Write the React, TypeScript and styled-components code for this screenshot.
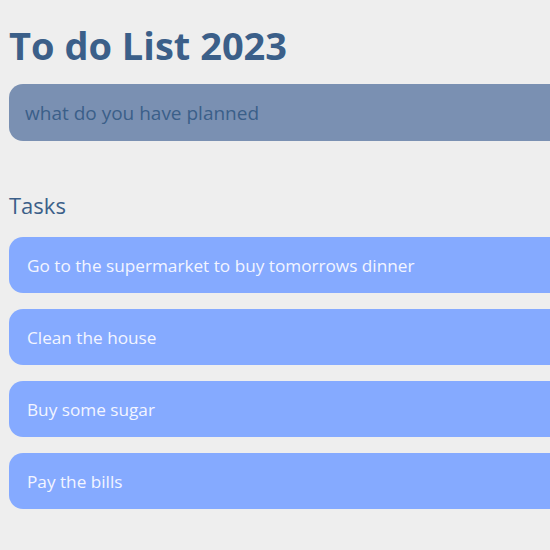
import React from "react";
import styled, { createGlobalStyle } from "styled-components";

const GlobalStyle = createGlobalStyle`
  html, body {
    margin: 0;
    padding: 0;
    background-color: #eeeeee;
    overflow: hidden;
    font-family: "Open Sans", "Noto Sans", sans-serif;
  }
`;

const Page = styled.main`
  padding: 0 9px;
  width: 700px;
`;

const Title = styled.h1`
  margin: 0;
  padding-top: 20px;
  font-size: 38px;
  font-weight: 700;
  line-height: 50px;
  color: #3b5f89;
`;

const Input = styled.input`
  display: block;
  box-sizing: border-box;
  width: 100%;
  height: 57px;
  margin-top: 14px;
  padding: 0 16px;
  border: none;
  border-radius: 14px;
  background-color: #7a90b2;
  font-family: inherit;
  font-size: 19px;
  color: #3b5f89;
  outline: none;

  &::placeholder {
    color: #3b5f89;
    opacity: 1;
  }
`;

const SectionTitle = styled.h2`
  margin: 49px 0 0;
  font-size: 22px;
  font-weight: 400;
  line-height: 30px;
  color: #3b5f89;
`;

const TaskList = styled.ul`
  display: flex;
  flex-direction: column;
  gap: 16px;
  margin: 17px 0 0;
  padding: 0;
`;

const TaskItem = styled.li`
  display: flex;
  align-items: center;
  height: 56px;
  padding: 0 18px;
  border-radius: 14px;
  background-color: #85aaff;
  list-style-type: none;
  font-size: 17.2px;
  color: #f3f5ff;
`;

const tasks = [
  "Go to the supermarket to buy tomorrows dinner",
  "Clean the house",
  "Buy some sugar",
  "Pay the bills",
];

const App = () => {
  return (
    <>
      <GlobalStyle />
      <Page>
        <Title>To do List 2023</Title>
        <Input placeholder="what do you have planned" />
        <SectionTitle>Tasks</SectionTitle>
        <TaskList>
          {tasks.map((task) => (
            <TaskItem key={task}>{task}</TaskItem>
          ))}
        </TaskList>
      </Page>
    </>
  );
};

export default App;
